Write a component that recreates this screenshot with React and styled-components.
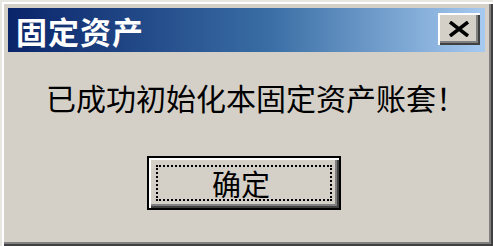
import React from "react";
import styled, { createGlobalStyle } from "styled-components";

const Global = createGlobalStyle`
  html, body { margin: 0; padding: 0; background: #d4d0c8; }
  * { box-sizing: border-box; }
`;

const Window = styled.div`
  width: 493px;
  height: 246px;
  background: #d4d0c8;
  padding: 8px 8px 8px 8px;
  display: flex;
  flex-direction: column;
  box-shadow:
    inset 2px 2px 0 #e8e6e0,
    inset 4px 4px 0 #ffffff,
    inset -2px -2px 0 #404040,
    inset -4px -4px 0 #808080;
  font-family: "Noto Sans CJK SC", "Noto Sans", sans-serif;
`;

const TitleBar = styled.div`
  height: 44px;
  display: flex;
  align-items: center;
  justify-content: space-between;
  padding: 0 5px 0 8px;
  background: linear-gradient(to right, #0a246a 0%, #3a6ea5 55%, #a6caf0 100%);
`;

const Title = styled.div`
  color: #ffffff;
  font-weight: 700;
  font-size: 31px;
  line-height: 31px;
  letter-spacing: 1px;
`;

const CloseButton = styled.div`
  width: 42px;
  height: 32px;
  margin-top: -2px;
  background: #d4d0c8;
  display: flex;
  align-items: center;
  justify-content: center;
  box-shadow:
    inset 2px 2px 0 #ffffff,
    inset -2px -2px 0 #404040,
    inset -4px -4px 0 #808080;
`;

const Body = styled.div`
  flex: 1;
  display: flex;
  flex-direction: column;
`;

const Message = styled.div`
  margin-top: 30px;
  padding-left: 38px;
  font-size: 30px;
  line-height: 30px;
  color: #000;
  white-space: nowrap;
`;

const ButtonRow = styled.div`
  margin-top: 44px;
  display: flex;
  justify-content: center;
  padding-right: 5px;
`;

const DefaultButton = styled.div`
  width: 194px;
  height: 54px;
  border: 2px solid #000;
  background: #d4d0c8;
  padding: 7px;
  display: flex;
  box-shadow:
    inset 2px 2px 0 #ffffff,
    inset -2px -2px 0 #404040,
    inset -4px -4px 0 #808080;
`;

const FocusRect = styled.div`
  flex: 1;
  border: 2px dotted #000;
  display: flex;
  align-items: center;
  justify-content: center;
  padding-right: 6px;
  font-size: 29px;
  line-height: 29px;
  color: #000;
`;

export default function App() {
  return (
    <>
      <Global />
      <Window>
        <TitleBar>
          <Title>固定资产</Title>
          <CloseButton>
            <svg width="22" height="16" viewBox="0 0 22 16">
              <path d="M2 1 L20 15 M20 1 L2 15" stroke="#000" strokeWidth="3.5" fill="none" />
            </svg>
          </CloseButton>
        </TitleBar>
        <Body>
          <Message>已成功初始化本固定资产账套！</Message>
          <ButtonRow>
            <DefaultButton>
              <FocusRect>确定</FocusRect>
            </DefaultButton>
          </ButtonRow>
        </Body>
      </Window>
    </>
  );
}
